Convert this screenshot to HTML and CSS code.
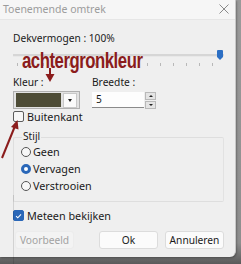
FILE: index.html
```html
<!DOCTYPE html>
<html lang="nl">
<head>
  <meta charset="UTF-8">
  <title>Toenemende omtrek</title>
  <link rel="stylesheet" href="styles.css">
</head>
<body>
  <div class="window">
    <div class="titlebar">
      <span class="title">Toenemende omtrek</span>
      <svg class="close" width="10" height="10" viewBox="0 0 10 10">
        <path d="M0.5 0.5 L9.5 9.5 M9.5 0.5 L0.5 9.5" stroke="#8a8a8a" stroke-width="1" fill="none"/>
      </svg>
    </div>

    <div class="content">
      <div class="text">Dekvermogen : 100%</div>
      <div class="slider">
        <div class="track"></div>
        <div class="thumb"></div>
      </div>
      <div class="ticks"></div>

      <div class="fields">
        <div class="field">
          <div class="text">Kleur :</div>
          <div class="colorpick">
            <div class="swatch"></div>
            <div class="drop"><span class="caret"></span></div>
          </div>
        </div>
        <div class="field">
          <div class="text">Breedte :</div>
          <div class="spinrow">
            <div class="input">5</div>
            <div class="spins">
              <div class="spin"><span class="up"></span></div>
              <div class="spin"><span class="down"></span></div>
            </div>
          </div>
        </div>
      </div>

      <div class="check"><span class="box"></span>Buitenkant</div>

      <div class="group">
        <div class="legend">Stijl</div>
        <div class="radio"><span class="dot"></span>Geen</div>
        <div class="radio"><span class="dot on"></span>Vervagen</div>
        <div class="radio"><span class="dot"></span>Verstrooien</div>
      </div>

      <div class="check meteen"><span class="box on">
        <svg width="10" height="10" viewBox="0 0 10 10"><path d="M2.3 5.2 L4.2 7 L7.8 3.2" stroke="#fff" stroke-width="1.2" fill="none"/></svg>
      </span>Meteen bekijken</div>

      <div class="buttons">
        <div class="btn disabled">Voorbeeld</div>
        <div class="spacer"></div>
        <div class="btn">Ok</div>
        <div class="btn">Annuleren</div>
      </div>
    </div>

    <div class="note">achtergronkleur</div>
    <svg class="arrows" width="236" height="257" viewBox="0 0 236 257">
      <path d="M50 68 L50 76" stroke="#8b1c1c" stroke-width="2" fill="none"/>
      <path d="M45.5 74 L50 82 L54.5 74 Z" fill="#8b1c1c"/>
      <path d="M2 158 L15 126" stroke="#8b1c1c" stroke-width="2" fill="none"/>
      <path d="M11 127 L17.5 120 L18.5 129.5 Z" fill="#8b1c1c"/>
    </svg>
  </div>
  <div class="mark"></div>
</body>
</html>
```

FILE: styles.css
```css
html,
body {
  margin: 0;
  padding: 0;
}

body {
  width: 241px;
  height: 264px;
  background: linear-gradient(#9a9a9a, #8e8e8e 92%, #5a5a5a);
  font-family: "Noto Sans", "Open Sans", sans-serif;
  font-size: 10.2px;
  color: #1a1a1a;
  position: relative;
  overflow: hidden;
}

.window {
  position: relative;
  width: 235px;
  height: 257px;
  background: #efefef;
  border-right: 1px solid #c8c8c8;
  border-bottom-right-radius: 6px;
  box-shadow: 1px 1px 2px rgba(0, 0, 0, .25);
}

.titlebar {
  height: 19px;
  display: flex;
  align-items: center;
  justify-content: space-between;
  padding: 0 5px 0 3px;
  background: #f6f6f6;
  border-bottom: 1px solid #e6e6e6;
}

.title {
  color: #9c9c9c;
  font-size: 10.5px;
  margin-top: -2px;
}

.close {
  margin-right: 1px;
  margin-top: -1px;
}

.content {
  padding: 11px 11px 0 13px;
}

.text {
  line-height: 15px;
}

.slider {
  position: relative;
  height: 10px;
  margin-top: 4px;
}

.track {
  position: absolute;
  left: 0;
  right: 0;
  top: 4px;
  height: 2px;
  background: #d6d6d6;
  border-bottom: 1px solid #e8e8e8;
}

.thumb {
  position: absolute;
  right: 1px;
  top: 0;
  width: 6px;
  height: 7px;
  background: #2c6fc4;
  border-radius: 1px 1px 0 0;
}

.thumb::after {
  content: "";
  position: absolute;
  left: 0;
  top: 7px;
  border-left: 3px solid transparent;
  border-right: 3px solid transparent;
  border-top: 3px solid #2c6fc4;
}

.ticks {
  height: 3px;
  margin: 3px 2px 0 4px;
  background: repeating-linear-gradient(90deg, #b8b8b8 0 1px, transparent 1px 13px);
}

.fields {
  display: flex;
  gap: 12px;
  margin-top: 9px;
}

.colorpick {
  display: flex;
  align-items: center;
  gap: 2px;
  width: 61px;
  height: 14px;
  padding: 1px 2px;
  margin-top: 1px;
  background: #e2e2e2;
  border: 1px solid #b0b0b0;
}

.swatch {
  flex: 1;
  height: 14px;
  background: #4d4c36;
}

.drop {
  width: 12px;
  height: 13px;
  background: #fbfbfb;
  border: 1px solid #c9c9c9;
  display: flex;
  align-items: center;
  justify-content: center;
}

.caret {
  border-left: 2px solid transparent;
  border-right: 2px solid transparent;
  border-top: 3px solid #222;
}

.spinrow {
  display: flex;
  gap: 1px;
  margin-top: 2px;
}

.input {
  width: 48px;
  height: 15px;
  line-height: 15px;
  padding-left: 4px;
  background: #fdfdfd;
  border-bottom: 1px solid #8a8a8a;
}

.spins {
  display: flex;
  flex-direction: column;
  gap: 1px;
}

.spin {
  width: 9px;
  height: 6px;
  background: #e4e4e4;
  border: 1px solid #b9b9b9;
  display: flex;
  align-items: center;
  justify-content: center;
}

.up {
  border-left: 2px solid transparent;
  border-right: 2px solid transparent;
  border-bottom: 2px solid #222;
}

.down {
  border-left: 2px solid transparent;
  border-right: 2px solid transparent;
  border-top: 2px solid #222;
}

.check {
  display: flex;
  align-items: center;
  gap: 3px;
  margin-top: 0;
  line-height: 15px;
  font-size: 10.8px;
}

.box {
  width: 9px;
  height: 9px;
  border: 1px solid #5c5c5c;
  border-radius: 2px;
  background: #f7f7f7;
  display: flex;
  align-items: center;
  justify-content: center;
}

.box.on {
  background: #2a67b8;
  border-color: #2a67b8;
}

.group {
  position: relative;
  margin-top: 13px;
  height: 58px;
  padding: 5px 0 0 7px;
  border: 1px solid #dedede;
  border-right-color: #e2e2e2;
  border-radius: 2px;
}

.legend {
  position: absolute;
  left: 8px;
  top: -9px;
  padding: 0 1px;
  background: #efefef;
  line-height: 15px;
}

.radio {
  display: flex;
  align-items: center;
  gap: 2px;
  height: 17px;
  font-size: 10.8px;
}

.dot {
  width: 10px;
  height: 10px;
  border: 1px solid #555;
  border-radius: 50%;
  background: #f7f7f7;
  box-sizing: border-box;
}

.dot.on {
  border: 3px solid #2a67b8;
  background: #fff;
}

.meteen {
  margin-top: 6px;
}

.buttons {
  display: flex;
  gap: 7px;
  margin-top: 8px;
}

.spacer {
  flex: 1;
}

.btn {
  width: 57px;
  height: 16px;
  line-height: 16px;
  text-align: center;
  background: #fbfbfb;
  border: 1px solid #dcdcdc;
  border-radius: 3px;
}

.btn.disabled {
  margin-left: 2px;
  color: #a2a2a2;
  background: #f3f3f3;
  border-color: #ececec;
}

.note {
  position: absolute;
  left: 22px;
  top: 50px;
  font-family: "Liberation Sans", Arial, sans-serif;
  font-weight: bold;
  font-size: 22px;
  line-height: 22px;
  color: #8b1c1c;
  letter-spacing: -0.6px;
  transform: scaleX(0.76);
  transform-origin: left top;
}

.arrows {
  position: absolute;
  left: 0;
  top: 0;
}

.mark {
  position: absolute;
  left: 13px;
  top: 195px;
  width: 1px;
  height: 69px;
  background: rgba(0, 0, 0, .12);
}
```
